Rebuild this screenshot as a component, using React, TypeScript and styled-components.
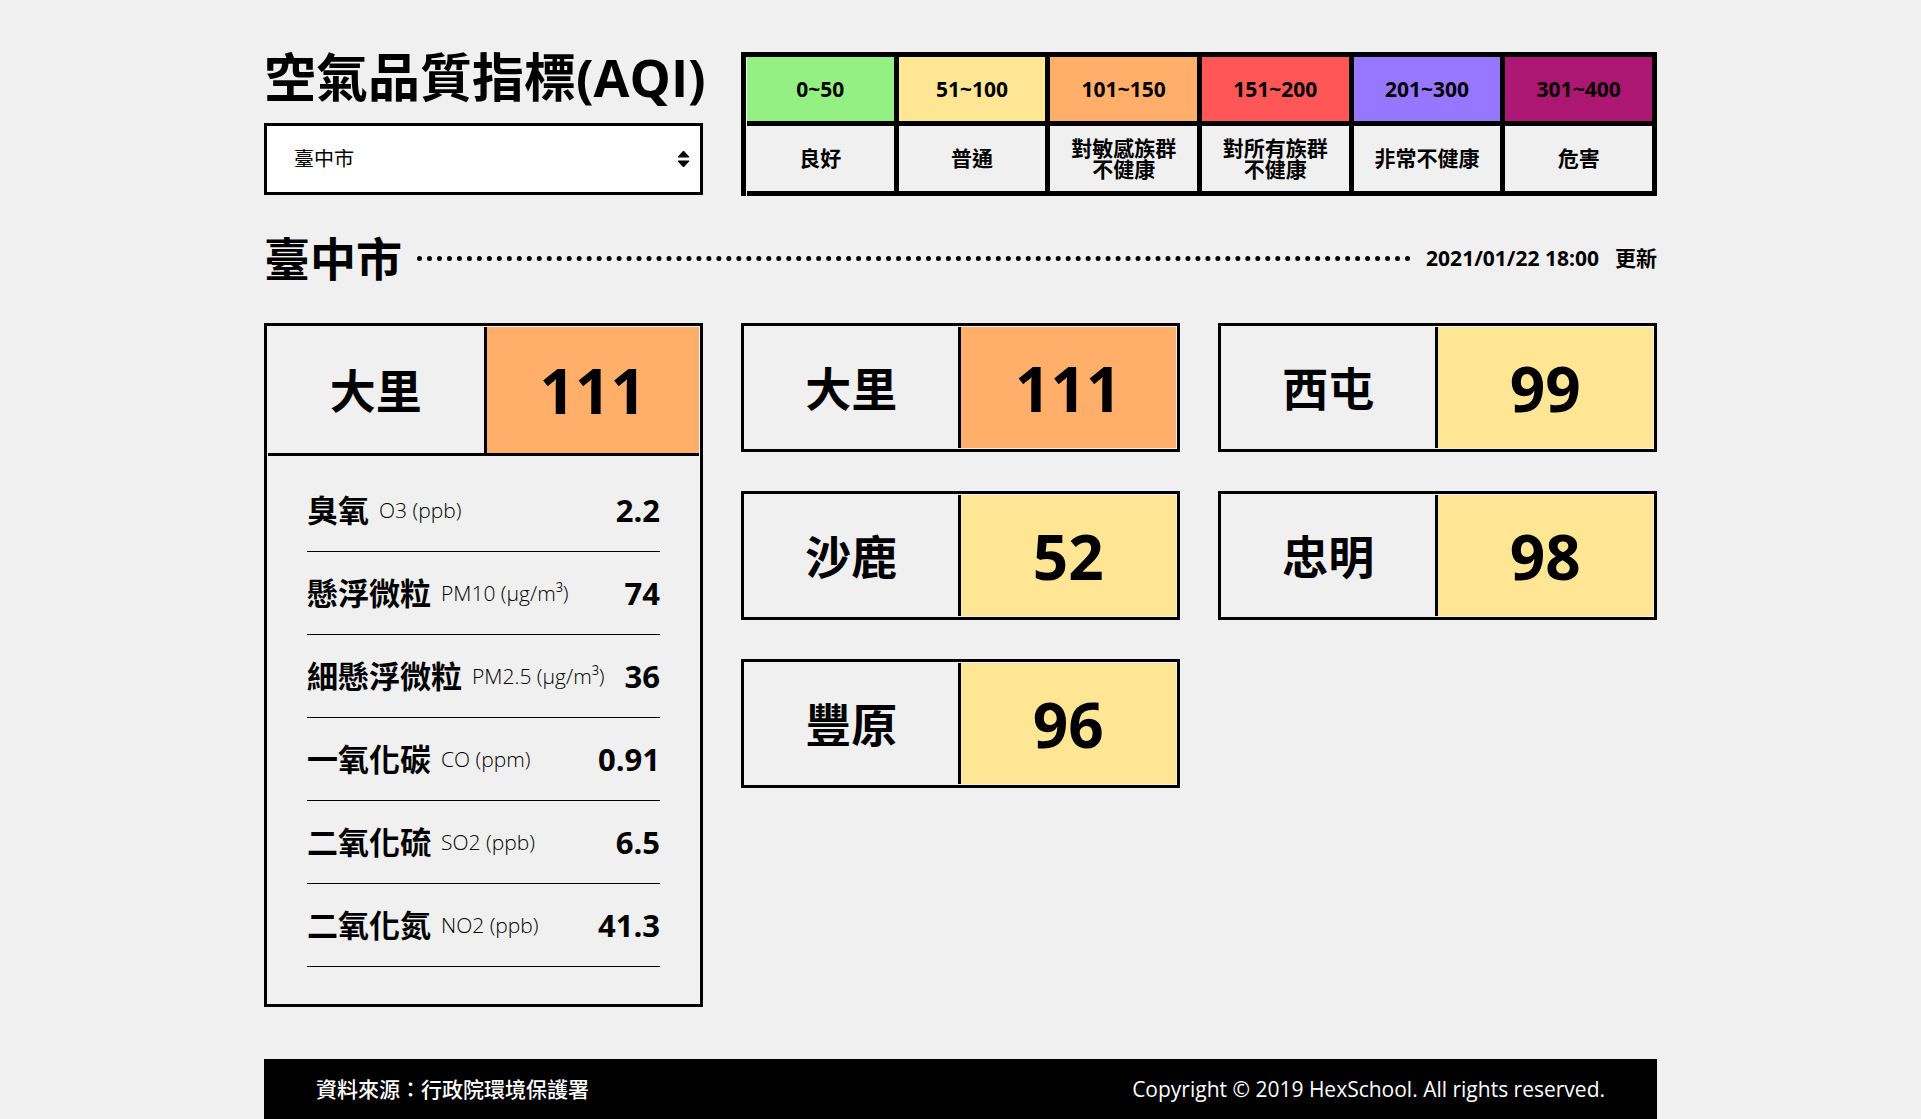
import React, { useState } from "react";
import styled, { createGlobalStyle } from "styled-components";

const ink = "#000";
const paper = "#f0f0f0";

const levels = [
  { range: "0~50", lines: ["良好"], color: "#95f084" },
  { range: "51~100", lines: ["普通"], color: "#ffe695" },
  { range: "101~150", lines: ["對敏感族群", "不健康"], color: "#ffaf6a" },
  { range: "151~200", lines: ["對所有族群", "不健康"], color: "#ff5757" },
  { range: "201~300", lines: ["非常不健康"], color: "#9777ff" },
  { range: "301~400", lines: ["危害"], color: "#ad1774" },
];

const limits = [50, 100, 150, 200, 300];

function levelColor(aqi: number) {
  const index = limits.findIndex((limit) => aqi <= limit);
  return levels[index === -1 ? levels.length - 1 : index].color;
}

const pollutants = [
  { name: "臭氧", unit: "O3 (ppb)", value: "2.2" },
  { name: "懸浮微粒", unit: "PM10 (μg/m³)", value: "74" },
  { name: "細懸浮微粒", unit: "PM2.5 (μg/m³)", value: "36" },
  { name: "一氧化碳", unit: "CO (ppm)", value: "0.91" },
  { name: "二氧化硫", unit: "SO2 (ppb)", value: "6.5" },
  { name: "二氧化氮", unit: "NO2 (ppb)", value: "41.3" },
];

const stations = [
  { name: "大里", aqi: 111 },
  { name: "西屯", aqi: 99 },
  { name: "沙鹿", aqi: 52 },
  { name: "忠明", aqi: 98 },
  { name: "豐原", aqi: 96 },
];

const GlobalStyle = createGlobalStyle`
  *, *::before, *::after { box-sizing: border-box; }
  body, h1, h2, h3, p, dl, dd, ul { margin: 0; padding: 0; }
  body {
    background: ${paper};
    color: ${ink};
    font-family: "Open Sans", "Noto Sans CJK TC", sans-serif;
    font-size: 21px;
    line-height: 1;
  }
`;

const Page = styled.div`
  max-width: 1393px;
  margin: 0 auto;
  padding-top: 52px;
`;

const Columns = styled.div`
  display: grid;
  grid-template-columns: repeat(3, minmax(0, 1fr));
  gap: 39px 38px;
  align-items: start;
`;

const Title = styled.h1`
  margin-bottom: 21px;
  font-size: 52px;
  font-weight: 700;
  line-height: 50px;
  white-space: nowrap;
`;

const SelectBox = styled.div`
  position: relative;
`;

const CitySelect = styled.select`
  display: block;
  width: 100%;
  height: 72px;
  padding: 0 40px 0 27px;
  border: 3px solid ${ink};
  border-radius: 0;
  background: #fff;
  color: ${ink};
  font: inherit;
  font-size: 20px;
  appearance: none;
`;

const SortIcon = styled.svg`
  position: absolute;
  top: 50%;
  right: 13px;
  width: 13px;
  height: 18px;
  transform: translateY(-50%);
  pointer-events: none;
`;

const Legend = styled.table`
  grid-column: span 2;
  width: 100%;
  table-layout: fixed;
  border-collapse: separate;
  border-spacing: 0;
  border: solid ${ink};
  border-width: 5px 0 0 5px;
  padding: 0 0 0 1px;
  font-weight: 700;
  line-height: 21px;
  text-align: center;
`;

const Range = styled.th<{ $color: string }>`
  height: 69px;
  padding: 0;
  border: solid ${ink};
  border-width: 0 5px 5px 0;
  background: ${(p) => p.$color};
`;

const Meaning = styled.td`
  height: 70px;
  padding: 0;
  border: solid ${ink};
  border-width: 0 5px 5px 0;
`;

const Line = styled.span`
  display: block;
`;

const CityBar = styled.div`
  display: flex;
  align-items: center;
  gap: 15px;
  margin: 39px 0 42px;
`;

const CityName = styled.h2`
  font-size: 46px;
  font-weight: 700;
  line-height: 46px;
`;

const Dots = styled.div`
  flex: 1;
  border-top: 5px dotted ${ink};
`;

const Updated = styled.p`
  display: flex;
  gap: 16px;
  font-weight: 700;
`;

const Card = styled.section`
  padding: 1px;
  border: 3px solid ${ink};
`;

const CardHead = styled.div<{ $large?: boolean }>`
  display: flex;
  height: ${(p) => (p.$large ? 129 : 121)}px;
  border-bottom: ${(p) => (p.$large ? `3px solid ${ink}` : "0")};
`;

const StationName = styled.h3<{ $large?: boolean }>`
  display: flex;
  align-items: center;
  justify-content: center;
  flex: none;
  width: ${(p) => (p.$large ? "calc(50% + 3px)" : "50%")};
  border-right: 3px solid ${ink};
  font-size: 46px;
  font-weight: 700;
`;

const Aqi = styled.p<{ $color: string }>`
  display: flex;
  align-items: center;
  justify-content: center;
  flex: 1;
  background: ${(p) => p.$color};
  font-size: 62px;
  font-weight: 700;
`;

const Readings = styled.dl`
  padding: 13px 39px 36px;
`;

const Reading = styled.div`
  display: flex;
  align-items: center;
  height: 83px;
  border-bottom: 1px solid ${ink};
`;

const Pollutant = styled.dt`
  display: flex;
  flex: 1;
  align-items: center;
  gap: 10px;
  font-size: 31px;
  font-weight: 700;
  white-space: nowrap;
`;

const Unit = styled.span`
  font-size: 21px;
  font-weight: 300;
`;

const Value = styled.dd`
  font-size: 31px;
  font-weight: 700;
`;

const StationGrid = styled.div`
  grid-column: span 2;
  display: grid;
  grid-template-columns: repeat(2, minmax(0, 1fr));
  gap: 39px 38px;
`;

const Footer = styled.footer`
  display: flex;
  align-items: center;
  justify-content: space-between;
  min-height: 60px;
  margin-top: 52px;
  padding: 0 52px;
  background: ${ink};
  color: #fff;
`;

const Source = styled.p`
  font-weight: 500;
`;

function Station({ name, aqi, large }: { name: string; aqi: number; large?: boolean }) {
  return (
    <CardHead $large={large}>
      <StationName $large={large}>{name}</StationName>
      <Aqi $color={levelColor(aqi)}>{aqi}</Aqi>
    </CardHead>
  );
}

export default function App() {
  const [city, setCity] = useState("臺中市");

  return (
    <>
      <GlobalStyle />
      <Page>
        <Columns as="header">
          <div>
            <Title id="page-title">空氣品質指標(AQI)</Title>
            <SelectBox>
              <CitySelect
                aria-labelledby="page-title"
                value={city}
                onChange={(e) => setCity(e.target.value)}
              >
                <option>臺中市</option>
              </CitySelect>
              <SortIcon viewBox="0 0 13 18" aria-hidden="true">
                <path d="M6.5 1 12 7H1ZM1 11h11l-5.5 6Z" stroke="#000" strokeLinejoin="round" />
              </SortIcon>
            </SelectBox>
          </div>
          <Legend>
            <thead>
              <tr>
                {levels.map((l) => (
                  <Range key={l.range} $color={l.color} scope="col">
                    {l.range}
                  </Range>
                ))}
              </tr>
            </thead>
            <tbody>
              <tr>
                {levels.map((l) => (
                  <Meaning key={l.range}>
                    {l.lines.map((line) => (
                      <Line key={line}>{line}</Line>
                    ))}
                  </Meaning>
                ))}
              </tr>
            </tbody>
          </Legend>
        </Columns>

        <main>
          <CityBar>
            <CityName>{city}</CityName>
            <Dots />
            <Updated>
              <time dateTime="2021-01-22T18:00">2021/01/22 18:00</time>
              <span>更新</span>
            </Updated>
          </CityBar>

          <Columns>
            <Card>
              <Station name="大里" aqi={111} large />
              <Readings>
                {pollutants.map((p) => (
                  <Reading key={p.name}>
                    <Pollutant>
                      {p.name}
                      <Unit>{p.unit}</Unit>
                    </Pollutant>
                    <Value>{p.value}</Value>
                  </Reading>
                ))}
              </Readings>
            </Card>
            <StationGrid>
              {stations.map((s) => (
                <Card key={s.name}>
                  <Station name={s.name} aqi={s.aqi} />
                </Card>
              ))}
            </StationGrid>
          </Columns>
        </main>

        <Footer>
          <Source>資料來源：行政院環境保護署</Source>
          <p>Copyright © 2019 HexSchool. All rights reserved.</p>
        </Footer>
      </Page>
    </>
  );
}
